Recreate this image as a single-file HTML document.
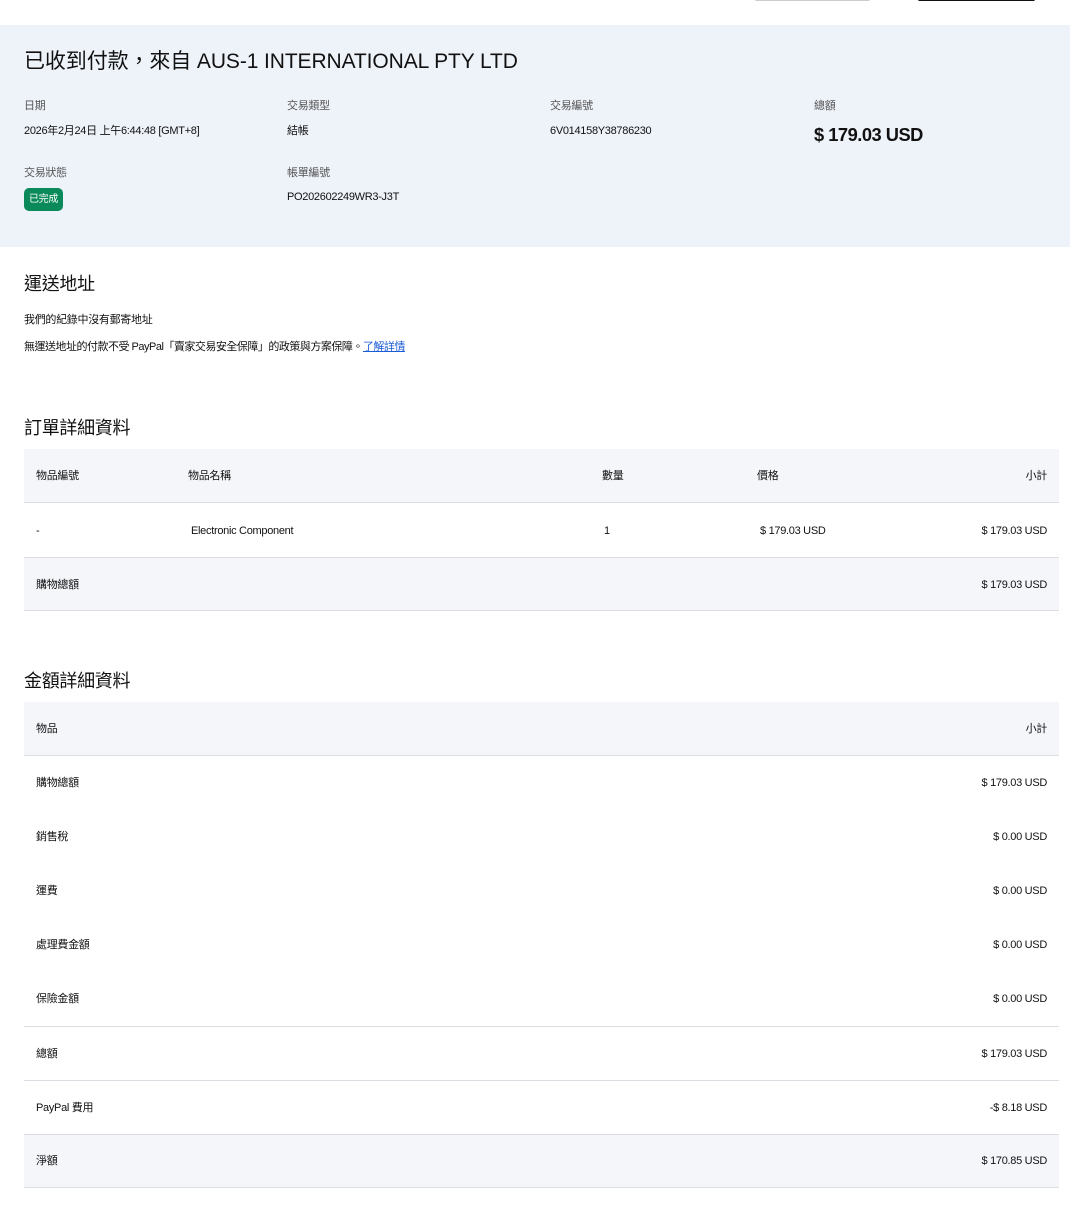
<!DOCTYPE html>
<html><head><meta charset="utf-8"><style>
*{margin:0;padding:0;box-sizing:border-box}
body{width:1070px;height:1222px;background:#fff;position:relative;overflow:hidden;font-family:"Liberation Sans","Noto Sans CJK TC",sans-serif;color:#111;font-size:11px;letter-spacing:-0.3px}
.a{position:absolute;white-space:nowrap;line-height:1;margin-top:1px}
.lbl{color:#555}
.band{position:absolute;left:0;top:25px;width:1070px;height:222px;background:#eef2f9}
.row{position:absolute;left:24px;width:1035px}
.g{background:#f5f6fa}
.bb{border-bottom:1px solid #dcdde3}
.r{right:23px}
</style></head><body>
<div class="a" style="left:755px;top:-3px;width:115px;height:3px;background:#ccc;border-radius:2px"></div>
<div class="a" style="left:918px;top:-3px;width:117px;height:3px;background:#111;border-radius:2px"></div>
<div class="band"></div>
<div class="a" style="left:24px;top:50px;font-size:21px;letter-spacing:-0.1px">已收到付款，來自 AUS-1 INTERNATIONAL PTY LTD</div>
<div class="a lbl" style="left:24px;top:100px">日期</div>
<div class="a lbl" style="left:287px;top:100px">交易類型</div>
<div class="a lbl" style="left:550px;top:100px">交易編號</div>
<div class="a lbl" style="left:814px;top:100px">總額</div>
<div class="a" style="left:24px;top:125px">2026年2月24日 上午6:44:48 [GMT+8]</div>
<div class="a" style="left:287px;top:125px">結帳</div>
<div class="a" style="left:550px;top:125px">6V014158Y38786230</div>
<div class="a" style="left:814px;top:125px;font-size:18.3px;font-weight:bold;letter-spacing:-0.5px">$ 179.03 USD</div>
<div class="a lbl" style="left:24px;top:167px">交易狀態</div>
<div class="a lbl" style="left:287px;top:167px">帳單編號</div>
<div class="a" style="left:24px;top:187px;width:39px;height:23px;background:#0a8a5a;border-radius:5px;color:#fff;font-size:10px;line-height:23px;text-align:center">已完成</div>
<div class="a" style="left:287px;top:191px">PO202602249WR3-J3T</div>

<div class="a" style="left:24px;top:274px;font-size:18px">運送地址</div>
<div class="a" style="left:24px;top:314px">我們的紀錄中沒有郵寄地址</div>
<div class="a" style="left:24px;top:341px;letter-spacing:-0.5px">無運送地址的付款不受 PayPal「賣家交易安全保障」的政策與方案保障。<span style="color:#1a5bd6;text-decoration:underline">了解詳情</span></div>

<div class="a" style="left:24px;top:418px;font-size:18px">訂單詳細資料</div>
<div class="row g bb" style="top:449px;height:54px"></div>
<div class="row bb" style="top:503px;height:55px"></div>
<div class="row g bb" style="top:558px;height:53px"></div>
<div class="a" style="left:36px;top:470px">物品編號</div>
<div class="a" style="left:188px;top:470px">物品名稱</div>
<div class="a" style="left:602px;top:470px">數量</div>
<div class="a" style="left:757px;top:470px">價格</div>
<div class="a r" style="top:470px">小計</div>
<div class="a" style="left:36px;top:525px">-</div>
<div class="a" style="left:191px;top:525px">Electronic Component</div>
<div class="a" style="left:604px;top:525px">1</div>
<div class="a" style="left:760px;top:525px">$ 179.03 USD</div>
<div class="a r" style="top:525px">$ 179.03 USD</div>
<div class="a" style="left:36px;top:579px">購物總額</div>
<div class="a r" style="top:579px">$ 179.03 USD</div>

<div class="a" style="left:24px;top:671px;font-size:18px">金額詳細資料</div>
<div class="row g bb" style="top:702px;height:54px"></div>
<div class="row bb" style="top:972px;height:55px"></div>
<div class="row bb" style="top:1027px;height:54px"></div>
<div class="row bb" style="top:1081px;height:54px"></div>
<div class="row g bb" style="top:1135px;height:53px"></div>
<div class="a" style="left:36px;top:723px">物品</div>
<div class="a r" style="top:723px">小計</div>
<div class="a" style="left:36px;top:777px">購物總額</div>
<div class="a r" style="top:777px">$ 179.03 USD</div>
<div class="a" style="left:36px;top:831px">銷售稅</div>
<div class="a r" style="top:831px">$ 0.00 USD</div>
<div class="a" style="left:36px;top:885px">運費</div>
<div class="a r" style="top:885px">$ 0.00 USD</div>
<div class="a" style="left:36px;top:939px">處理費金額</div>
<div class="a r" style="top:939px">$ 0.00 USD</div>
<div class="a" style="left:36px;top:993px">保險金額</div>
<div class="a r" style="top:993px">$ 0.00 USD</div>
<div class="a" style="left:36px;top:1048px">總額</div>
<div class="a r" style="top:1048px">$ 179.03 USD</div>
<div class="a" style="left:36px;top:1102px">PayPal 費用</div>
<div class="a r" style="top:1102px">-$ 8.18 USD</div>
<div class="a" style="left:36px;top:1155px">淨額</div>
<div class="a r" style="top:1155px">$ 170.85 USD</div>
</body></html>
